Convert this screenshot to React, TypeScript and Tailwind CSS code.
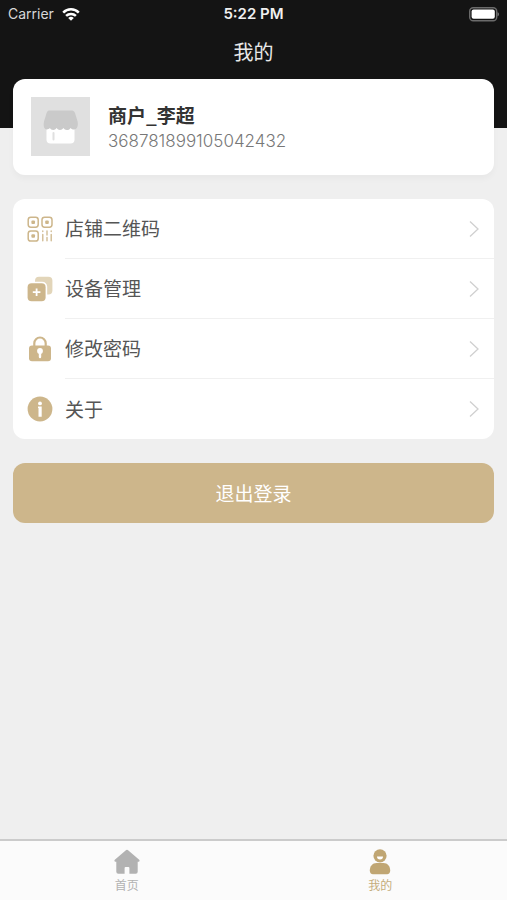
import type { ReactNode } from 'react'

function QrIcon() {
  return (
    <svg viewBox="0 0 26 26" className="size-[26px] shrink-0" fill="none" stroke="#cdb68b" strokeWidth="1.5" aria-hidden="true">
      <rect x="1.2" y="1.2" width="10" height="10" rx="2.6" />
      <rect x="15" y="1.2" width="10" height="10" rx="2.6" />
      <rect x="1.2" y="15" width="10" height="10" rx="2.6" />
      <g fill="#cdb68b" stroke="none">
        <rect x="4.4" y="4.4" width="3.6" height="3.6" rx="1" />
        <rect x="18.2" y="4.4" width="3.6" height="3.6" rx="1" />
        <rect x="4.4" y="18.2" width="3.6" height="3.6" rx="1" />
      </g>
      <g strokeLinecap="round" strokeWidth="1.3">
        <path d="M15.8 15v.6M15.8 18.4v6.4M20 15v4M20 21.4v3.4M24.2 15v.6M24.2 18.4v6.4" />
      </g>
    </svg>
  )
}

function DeviceIcon() {
  return (
    <svg viewBox="0 0 26 26" className="size-[26px] shrink-0" aria-hidden="true">
      <rect x="8" y="0.8" width="17.4" height="17.6" rx="4" fill="#e2d5b9" />
      <rect x="-0.8" y="5.8" width="21" height="21" rx="5" fill="#fff" />
      <rect x="0.6" y="7.2" width="18" height="18" rx="4" fill="#cdb68b" />
      <path d="M9.6 12.4v7.6M5.8 16.2h7.6" stroke="#fff" strokeWidth="1.8" />
    </svg>
  )
}

function LockIcon() {
  return (
    <svg viewBox="0 0 26 26" className="size-[26px] shrink-0" aria-hidden="true">
      <path d="M7.3 11V7.2a5.7 5.7 0 0 1 11.4 0V11" fill="none" stroke="#cdb68b" strokeWidth="2.2" />
      <rect x="2" y="9.4" width="22" height="15.8" rx="3" fill="#cdb68b" />
      <circle cx="13" cy="15" r="2.9" fill="#fff" />
      <path d="M13 16v5" stroke="#fff" strokeWidth="2.4" strokeLinecap="round" />
    </svg>
  )
}

function InfoIcon() {
  return (
    <svg viewBox="0 0 26 26" className="size-[26px] shrink-0" aria-hidden="true">
      <circle cx="13" cy="13" r="12.4" fill="#cdb68b" />
      <circle cx="13" cy="7.4" r="1.9" fill="#fff" />
      <path d="M11 10.4h3.7v10.4h-3.2v-8.8H11z" fill="#fff" />
    </svg>
  )
}

function ShopAvatar() {
  return (
    <svg viewBox="0 0 59 59" className="size-[59px] shrink-0" aria-hidden="true">
      <rect width="59" height="59" fill="#e0e0e0" />
      <path d="M15.5 28h28v14.400a4 4 0 0 1-4 4h-20a4 4 0 0 1-4-4z" fill="#fff" />
      <path d="M18.5 13.5H40c2 0 3.200.6 4 2.400l2.600 8.600c.8 4-.2 8-3.600 8-1.400 0-2.400-.6-3.400-1.600-1 1.600-2.400 2.200-3.800 2.200s-2.600-.8-3.400-2c-.8 1.200-2 2-3.400 2s-2.600-.8-3.400-2c-.8 1.200-2 2-3.400 2s-2.600-.8-3.400-2c-.8 1-1.800 1.400-3 1.400-3 0-3.600-4-2.800-8l2.600-8.600c.8-1.800 1.400-2.400 3.500-2.400z" fill="#cacaca" />
      <path d="M22.500 36v6.500" stroke="#e0e0e0" strokeWidth="2" strokeLinecap="round" />
    </svg>
  )
}

const menu: { label: string; icon: ReactNode }[] = [
  { label: '店铺二维码', icon: <QrIcon /> },
  { label: '设备管理', icon: <DeviceIcon /> },
  { label: '修改密码', icon: <LockIcon /> },
  { label: '关于', icon: <InfoIcon /> },
]

function StatusBar() {
  return (
    <div className="grid h-7 grid-cols-3 items-center px-2 font-[Inter,sans-serif] text-sm">
      <div className="flex items-center gap-2 text-[#d8d8d8]">
        <span>Carrier</span>
        <svg viewBox="0 0 18 13" className="h-[13px] w-[18px]" fill="none" stroke="#fff" strokeWidth="2.5" aria-hidden="true">
          <path d="M1.2 4.6a11 11 0 0 1 15.6 0M4.1 7.9a7 7 0 0 1 9.8 0" />
          <path d="M9 12.8 6.2 10a4 4 0 0 1 5.6 0z" fill="#fff" stroke="none" />
        </svg>
      </div>
      <span className="text-center text-[15px] font-semibold text-[#f0f0f0]">5:22 PM</span>
      <svg viewBox="0 0 30 15" className="h-[15px] w-[30px] justify-self-end" aria-hidden="true">
        <rect x="0.7" y="0.7" width="27" height="13" rx="3.5" fill="none" stroke="#6b6b6b" strokeWidth="1.4" />
        <rect x="2.6" y="2.6" width="23.200" height="9.200" rx="2" fill="#fff" />
        <path d="M28.600 5.200c1.600.6 1.600 3.400 0 4z" fill="#8a8a8a" />
      </svg>
    </div>
  )
}

function TabBar() {
  return (
    <nav className="grid h-[61px] grid-cols-2 border-t-2 border-[#cbcbcb] bg-[#fbfbfb] text-xs">
      <a href="#home" className="flex flex-col items-center pt-2 text-[#b2b2b2]">
        <svg viewBox="0 0 26 26" className="size-[26px]" fill="#b2b2b2" aria-hidden="true">
          <path d="M11.6 1.4a2 2 0 0 1 2.800 0L25.200 10.800c.7.700.4 2-.6 2h-.9v9.900a2 2 0 0 1-2 2h-6.300V19a1 1 0 0 0-1-1h-2.800a1 1 0 0 0-1 1v5.700H4.300a2 2 0 0 1-2-2v-9.900h-.9c-1 0-1.300-1.300-.6-2z" />
        </svg>
        <span className="leading-5">首页</span>
      </a>
      <a href="#mine" aria-current="page" className="flex flex-col items-center pt-2 text-[#c5ad7c]">
        <svg viewBox="0 0 26 26" className="size-[26px]" fill="#c0a673" aria-hidden="true">
          <circle cx="13" cy="6.800" r="6.600" />
          <path d="M10 7.600h6a3 3 0 0 1-6 0z" fill="#fff" />
          <path d="M9.500 14h7c4 0 6.700 3.400 6.700 7.400 0 2-1.200 3.800-3.200 3.800H6c-2 0-3.200-1.800-3.200-3.800C2.800 17.400 5.500 14 9.500 14z" />
        </svg>
        <span className="leading-5">我的</span>
      </a>
    </nav>
  )
}

export default function App() {
  return (
    <div className="flex min-h-screen flex-col bg-[#efefef] font-['Noto_Sans_CJK_SC',sans-serif]">
      <header className="h-32 bg-[#141414]">
        <StatusBar />
        <h1 className="text-center text-xl leading-[48px] text-[#e8e8e8]">我的</h1>
      </header>

      <main className="-mt-[49px] flex flex-1 flex-col gap-6 px-[13px] pb-6">
        <section className="flex items-start gap-[18px] rounded-xl bg-white px-[18px] pt-[18px] pb-[19px] shadow-[0_4px_6px_rgba(0,0,0,0.03)]">
          <ShopAvatar />
          <div className="min-w-0 pt-1">
            <h2 className="text-[19px] leading-7 font-bold text-[#333]">商户_李超</h2>
            <p className="font-[Inter,sans-serif] text-[17px] leading-6 font-light text-[#777]">368781899105042432</p>
          </div>
        </section>

        <ul className="overflow-hidden rounded-xl bg-white">
          {menu.map(({ label, icon }) => (
            <li key={label} className="group">
              <button type="button" className="flex h-[60px] w-full items-center gap-3 pl-[14px] text-left">
                {icon}
                <span className="flex flex-1 items-center justify-between self-stretch border-b border-[#f0f0f0] pr-[14px] text-[19px] text-[#555] group-last:border-0">
                  {label}
                  <svg viewBox="0 0 12 18" className="h-[18px] w-3" fill="none" stroke="#d0d0d0" strokeWidth="1.3" aria-hidden="true">
                    <path d="m2 1.5 8 7.500-8 7.500" />
                  </svg>
                </span>
              </button>
            </li>
          ))}
        </ul>

        <button type="button" className="h-[60px] rounded-xl bg-[#cdb68b] text-[19px] text-white">
          退出登录
        </button>
      </main>

      <TabBar />
    </div>
  )
}
